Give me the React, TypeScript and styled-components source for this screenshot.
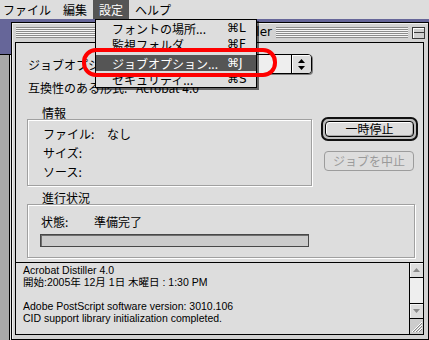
import React from 'react';
import styled, { createGlobalStyle } from 'styled-components';

const GlobalStyle = createGlobalStyle`
  html, body {
    margin: 0;
    padding: 0;
    background: #666699;
  }
  body {
    font-family: "Noto Sans CJK JP", "DejaVu Sans", sans-serif;
    font-size: 12px;
    color: #000;
  }
`;

const Screen = styled.div`
  position: relative;
  width: 429px;
  height: 340px;
  overflow: hidden;
  display: flex;
  flex-direction: column;
  background: #666699;
`;

/* ---------- menu bar ---------- */

const MenuBar = styled.div`
  height: 19px;
  display: flex;
  background: #dddddd;
  line-height: 19px;
  font-size: 12px;
`;

const MenuTitle = styled.div<{ $active?: boolean }>`
  padding: 0 6px;
  background: ${(p) => (p.$active ? '#555555' : 'transparent')};
  color: ${(p) => (p.$active ? '#ffffff' : '#000000')};
  &:first-child {
    padding-left: 3px;
  }
`;

const Dropdown = styled.div`
  position: absolute;
  left: 95px;
  top: 19px;
  width: 162px;
  box-sizing: border-box;
  border: 1px solid #000;
  background: #dddddd;
  box-shadow: 2px 2px 0 rgba(0, 0, 0, 0.55);
  z-index: 5;
`;

const MenuItem = styled.div<{ $selected?: boolean }>`
  height: 16px;
  display: flex;
  align-items: center;
  padding-left: 16px;
  background: ${(p) => (p.$selected ? '#555555' : 'transparent')};
  color: ${(p) => (p.$selected ? '#ffffff' : '#000000')};
  white-space: nowrap;
`;

const Shortcut = styled.span`
  margin-left: auto;
  width: 29px;
  font-family: "DejaVu Sans", sans-serif;
  font-size: 12px;
`;

const MenuGap = styled.div`
  height: 3px;
`;

const Callout = styled.div`
  position: absolute;
  left: 82px;
  top: 48px;
  width: 195px;
  height: 29px;
  box-sizing: border-box;
  border: 4px solid #ff0000;
  border-radius: 14px;
  z-index: 6;
`;

/* ---------- desktop and windows ---------- */

const Desktop = styled.div`
  flex: 1;
  display: flex;
  min-height: 0;
`;

const BackStrip = styled.div`
  width: 11px;
  display: flex;
  flex-direction: column;
`;

const DesktopGap = styled.div`
  height: 35px;
`;

const BackWindow = styled.div`
  flex: 1;
  background: #a8a8a8;
  border-top: 1px solid #000;
  box-shadow: inset -1px 0 0 #e8e8e8, inset -2px 0 0 #000;
`;

const Window = styled.div`
  flex: 1;
  margin-top: 3px;
  display: flex;
  flex-direction: column;
  border: 1px solid #000;
  background: #d2d2d2;
  padding: 0 4px 4px 3px;
  box-shadow: inset 1px 1px 0 #f0f0f0;
`;

const TitleBar = styled.div`
  height: 19px;
  margin: 0 -4px 0 -3px;
  padding: 0 3px 0 4px;
  display: flex;
  align-items: center;
`;

const Stripes = styled.div<{ $width?: number }>`
  flex: ${(p) => (p.$width ? `0 0 ${p.$width}px` : '1')};
  height: 11px;
  background: repeating-linear-gradient(to bottom, #8c8c8c 0 1px, #f6f6f6 1px 2px);
`;

const Title = styled.div`
  padding: 0 4px;
  font-family: "DejaVu Sans", sans-serif;
  font-size: 12px;
  line-height: 19px;
  white-space: nowrap;
`;

const CollapseBox = styled.div`
  width: 13px;
  height: 12px;
  margin-left: 4px;
  box-sizing: border-box;
  border: 1px solid #3a3a3a;
  background: linear-gradient(to bottom, #cfcfcf 0 4px, #3a3a3a 4px 5px, #cfcfcf 5px);
  box-shadow: inset 1px 1px 0 #ffffff;
`;

const Content = styled.div`
  flex: 1;
  display: flex;
  flex-direction: column;
  border: 1px solid #000;
  background: #dddddd;
  min-height: 0;
`;

const UpperPanel = styled.div`
  padding: 11px 0 4px 11px;
`;

const FieldRow = styled.div<{ $height: number; $gap?: number }>`
  display: flex;
  align-items: center;
  height: ${(p) => p.$height}px;
  margin-top: ${(p) => p.$gap ?? 0}px;
  padding-left: 1px;
  white-space: nowrap;
`;

const FieldLabel = styled.span<{ $width: number }>`
  width: ${(p) => p.$width}px;
  flex: none;
`;

const Popup = styled.div`
  width: 176px;
  height: 20px;
  box-sizing: border-box;
  display: flex;
  border: 1px solid #000;
  border-radius: 4px;
  background: #eeeeee;
  box-shadow: 1px 1px 0 #808080;
  overflow: hidden;
`;

const PopupBody = styled.div`
  flex: 1;
`;

const PopupArrows = styled.div`
  width: 19px;
  border-left: 1px solid #000;
  background: #dddddd;
  box-shadow: inset 1px 1px 0 #ffffff;
  display: flex;
  align-items: center;
  justify-content: center;
`;

const Middle = styled.div`
  display: flex;
  align-items: flex-start;
  margin-top: 12px;
`;

const Group = styled.div<{ $width: number; $gap?: number }>`
  width: ${(p) => p.$width}px;
  margin-top: ${(p) => p.$gap ?? 0}px;
`;

const GroupLabel = styled.div`
  height: 12px;
  line-height: 12px;
  padding-left: 15px;
`;

const GroupFrame = styled.div<{ $pad: string }>`
  border: 1px solid #a0a0a0;
  box-shadow: inset 1px 1px 0 #ffffff, 1px 1px 0 #ffffff;
  padding: ${(p) => p.$pad};
`;

const InfoRow = styled.div`
  display: flex;
  align-items: center;
  height: 19px;
`;

const ButtonColumn = styled.div`
  margin-left: 9px;
  padding-top: 10px;
  display: flex;
  flex-direction: column;
`;

const DefaultRing = styled.div`
  width: 97px;
  height: 24px;
  box-sizing: border-box;
  display: flex;
  border: 2px solid #111111;
  border-radius: 7px;
  padding: 2px;
  background: #bdbdbd;
`;

const PushButton = styled.div<{ $disabled?: boolean }>`
  flex: 1;
  box-sizing: border-box;
  display: flex;
  align-items: center;
  justify-content: center;
  border: 1px solid ${(p) => (p.$disabled ? '#9c9c9c' : '#000000')};
  border-radius: 4px;
  background: #dddddd;
  color: ${(p) => (p.$disabled ? '#9a9a9a' : '#000000')};
  box-shadow: ${(p) => (p.$disabled ? 'none' : 'inset 1px 1px 0 #ffffff, inset -1px -1px 0 #a8a8a8')};
  line-height: 14px;
`;

const CancelButton = styled(PushButton)`
  flex: none;
  width: 90px;
  height: 20px;
  margin: 10px 0 0 3px;
`;

const ProgressBar = styled.div`
  width: 269px;
  height: 13px;
  box-sizing: border-box;
  margin-top: 5px;
  border: 1px solid #474747;
  background: #cbcbcb;
  box-shadow: inset 1px 1px 0 #6e6e6e;
`;

/* ---------- log ---------- */

const LogPanel = styled.div`
  flex: 1;
  display: flex;
  border-top: 1px solid #000;
  min-height: 0;
`;

const LogText = styled.div`
  flex: 1;
  padding: 1px 0 0 7px;
  font-family: "Liberation Sans", "Noto Sans CJK JP", sans-serif;
  font-size: 10.5px;
  line-height: 12px;
  white-space: pre;
  overflow: hidden;
`;

const ScrollBar = styled.div`
  width: 13px;
  border-left: 1px solid #000;
  display: flex;
  flex-direction: column;
  background: #eeeeee;
`;

const ScrollArrow = styled.div<{ $down?: boolean }>`
  height: 14px;
  display: flex;
  align-items: center;
  justify-content: center;
  background: #dddddd;
  border-top: ${(p) => (p.$down ? '1px solid #000' : 'none')};
  border-bottom: ${(p) => (p.$down ? 'none' : '1px solid #000')};
  box-shadow: inset 1px 1px 0 #f4f4f4;
`;

const Track = styled.div`
  flex: 1;
`;

const GrowBox = styled.div`
  height: 15px;
  border-top: 1px solid #000;
  background: #cccccc;
  display: flex;
  align-items: center;
  justify-content: center;
`;

const Triangle: React.FC<{ down?: boolean; color?: string }> = ({ down, color = '#8a8a8a' }) => (
  <svg width="7" height="4" viewBox="0 0 7 4">
    <polygon points={down ? '0,0 7,0 3.5,4' : '0,4 7,4 3.5,0'} fill={color} />
  </svg>
);

const App: React.FC = () => {
  return (
    <Screen>
      <GlobalStyle />
      <MenuBar>
        <MenuTitle>ファイル</MenuTitle>
        <MenuTitle>編集</MenuTitle>
        <MenuTitle $active>設定</MenuTitle>
        <MenuTitle>ヘルプ</MenuTitle>
      </MenuBar>

      <Desktop>
        <BackStrip>
          <DesktopGap />
          <BackWindow />
        </BackStrip>

        <Window>
          <TitleBar>
            <Stripes />
            <Title>Acrobat Distiller</Title>
            <Stripes $width={132} />
            <CollapseBox />
          </TitleBar>

          <Content>
            <UpperPanel>
              <FieldRow $height={20}>
                <FieldLabel $width={108}>ジョブオプション:</FieldLabel>
                <Popup>
                  <PopupBody />
                  <PopupArrows>
                    <svg width="7" height="11" viewBox="0 0 7 11">
                      <polygon points="0,4 7,4 3.5,0" fill="#000" />
                      <polygon points="0,7 7,7 3.5,11" fill="#000" />
                    </svg>
                  </PopupArrows>
                </Popup>
              </FieldRow>
              <FieldRow $height={16} $gap={5}>
                <FieldLabel $width={108}>互換性のある形式:</FieldLabel>
                <span>Acrobat 4.0</span>
              </FieldRow>

              <Middle>
                <Group $width={285}>
                  <GroupLabel>情報</GroupLabel>
                  <GroupFrame $pad="4px 0 4px 15px">
                    <InfoRow>
                      <FieldLabel $width={64}>ファイル:</FieldLabel>
                      <span>なし</span>
                    </InfoRow>
                    <InfoRow>
                      <FieldLabel $width={64}>サイズ:</FieldLabel>
                    </InfoRow>
                    <InfoRow>
                      <FieldLabel $width={64}>ソース:</FieldLabel>
                    </InfoRow>
                  </GroupFrame>
                </Group>
                <ButtonColumn>
                  <DefaultRing>
                    <PushButton>一時停止</PushButton>
                  </DefaultRing>
                  <CancelButton $disabled>ジョブを中止</CancelButton>
                </ButtonColumn>
              </Middle>

              <Group $width={388} $gap={6}>
                <GroupLabel>進行状況</GroupLabel>
                <GroupFrame $pad="8px 0 10px 12px">
                  <FieldRow $height={16}>
                    <FieldLabel $width={53}>状態:</FieldLabel>
                    <span>準備完了</span>
                  </FieldRow>
                  <ProgressBar />
                </GroupFrame>
              </Group>
            </UpperPanel>

            <LogPanel>
              <LogText>
                {'Acrobat Distiller 4.0\n開始:2005年 12月 1日 木曜日 : 1:30 PM\n\nAdobe PostScript software version: 3010.106\nCID support library initialization completed.'}
              </LogText>
              <ScrollBar>
                <ScrollArrow>
                  <Triangle />
                </ScrollArrow>
                <Track />
                <ScrollArrow $down>
                  <Triangle down />
                </ScrollArrow>
                <GrowBox>
                  <svg width="12" height="12" viewBox="0 0 12 12">
                    <line x1="1" y1="11" x2="11" y2="1" stroke="#ffffff" strokeWidth="1" />
                    <line x1="2" y1="11" x2="11" y2="2" stroke="#8a8a8a" strokeWidth="1" />
                    <line x1="4" y1="11" x2="11" y2="4" stroke="#ffffff" strokeWidth="1" />
                    <line x1="5" y1="11" x2="11" y2="5" stroke="#8a8a8a" strokeWidth="1" />
                    <line x1="7" y1="11" x2="11" y2="7" stroke="#ffffff" strokeWidth="1" />
                    <line x1="8" y1="11" x2="11" y2="8" stroke="#8a8a8a" strokeWidth="1" />
                  </svg>
                </GrowBox>
              </ScrollBar>
            </LogPanel>
          </Content>
        </Window>
      </Desktop>

      <Dropdown>
        <MenuItem>
          フォントの場所...<Shortcut>⌘L</Shortcut>
        </MenuItem>
        <MenuItem>
          監視フォルダ...<Shortcut>⌘F</Shortcut>
        </MenuItem>
        <MenuGap />
        <MenuItem $selected>
          ジョブオプション...<Shortcut>⌘J</Shortcut>
        </MenuItem>
        <MenuItem>
          セキュリティ...<Shortcut>⌘S</Shortcut>
        </MenuItem>
      </Dropdown>
      <Callout />
    </Screen>
  );
};

export default App;
